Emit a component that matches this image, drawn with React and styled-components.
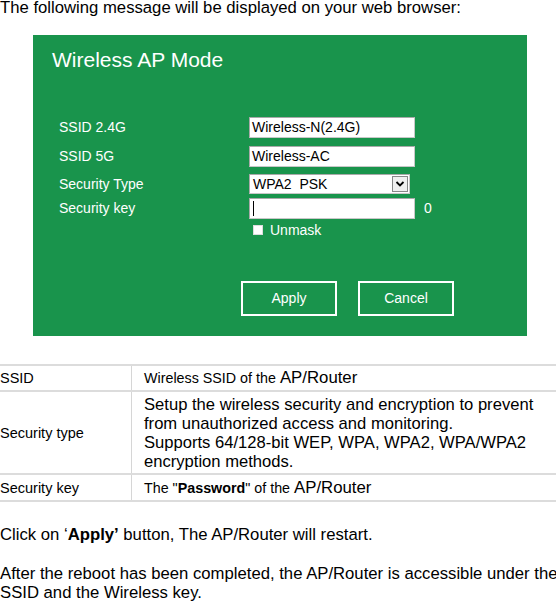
import React from "react";
import styled, { createGlobalStyle } from "styled-components";

const Global = createGlobalStyle`
  html, body { margin: 0; padding: 0; background: #fff; }
  body { font-family: "Liberation Sans", Arial, sans-serif; color: #000; }
`;

const Page = styled.div`
  width: 556px;
  display: flex;
  flex-direction: column;
`;

const Intro = styled.p`
  margin: 0;
  font-size: 16.7px;
  line-height: 16px;
  white-space: nowrap;
`;

const Panel = styled.div`
  margin: 19px 0 0 33px;
  width: 494px;
  height: 301px;
  background: #19944c;
  color: #fff;
  box-sizing: border-box;
  padding: 13px 0 0 19px;
  display: flex;
  flex-direction: column;
`;

const Title = styled.h1`
  margin: 0;
  font-size: 21px;
  font-weight: normal;
  line-height: 24px;
`;

const Form = styled.div`
  margin: 45px 0 0 7px;
  display: grid;
  grid-template-columns: 190px 166px auto;
  align-items: start;
`;

const Label = styled.div`
  font-size: 14px;
  height: ${(p) => p.h}px;
  line-height: ${(p) => p.lh || 20}px;
`;

const Cell = styled.div`
  height: ${(p) => p.h}px;
  display: flex;
  align-items: ${(p) => p.align || "flex-start"};
  box-sizing: border-box;
`;

const TextBox = styled.div`
  width: 166px;
  height: 21px;
  box-sizing: border-box;
  background: #fff;
  border: 1px solid #c8c8c8;
  border-top-color: #a9a9a9;
  border-left-color: #a9a9a9;
  color: #000;
  font-size: 14px;
  line-height: 19px;
  padding-left: 2px;
  display: flex;
  align-items: center;
`;

const Caret = styled.span`
  display: inline-block;
  width: 1px;
  height: 15px;
  background: #000;
  margin-left: 1px;
`;

const Select = styled.div`
  width: 161px;
  height: 20px;
  box-sizing: border-box;
  background: #fff;
  border: 1px solid #c8c8c8;
  border-top-color: #a9a9a9;
  border-left-color: #a9a9a9;
  color: #000;
  font-size: 14px;
  padding-left: 3px;
  display: flex;
  align-items: center;
  justify-content: space-between;
  white-space: pre;
`;

const Arrow = styled.div`
  width: 16px;
  height: 16px;
  box-sizing: border-box;
  border: 1px solid #888;
  background: #f0f0f0;
  margin-right: 1px;
  display: flex;
  align-items: center;
  justify-content: center;
`;

const Counter = styled.div`
  font-size: 14px;
  padding-left: 9px;
  height: 21px;
  line-height: 21px;
`;

const Check = styled.div`
  display: flex;
  align-items: center;
  gap: 7px;
  font-size: 14px;
  padding-left: 4px;
`;

const Box = styled.span`
  width: 10px;
  height: 10px;
  background: #fff;
  border: 1px solid #ddd;
  box-sizing: border-box;
`;

const Buttons = styled.div`
  margin: 43px 0 0 189px;
  display: flex;
  gap: 21px;
`;

const Button = styled.div`
  width: 96px;
  height: 35px;
  box-sizing: border-box;
  border: 2px solid #fff;
  color: #fff;
  font-size: 14px;
  display: flex;
  align-items: center;
  justify-content: center;
  padding-bottom: 2px;
`;

const Table = styled.table`
  margin-top: 28px;
  width: 556px;
  border-collapse: collapse;
  border-top: 2px solid #dcdcdc;
`;

const Tr = styled.tr`
  border-bottom: 2px solid #dcdcdc;
  height: ${(p) => p.h}px;
`;

const Th = styled.td`
  width: 131px;
  padding: 0;
  font-size: 14.5px;
  border-right: 1px solid #d6d6d6;
  vertical-align: middle;
`;

const Td = styled.td`
  padding: 0 0 0 12px;
  font-size: ${(p) => p.fs || 14.3}px;
  line-height: 19px;
  vertical-align: middle;
  white-space: nowrap;
`;

const Big = styled.span`
  font-size: 16.8px;
`;

const Para = styled.p`
  margin: ${(p) => p.mt}px 0 0;
  font-size: 16.7px;
  line-height: 19px;
  white-space: nowrap;
`;

const Chevron = () => (
  <svg width="10" height="8" viewBox="0 0 10 8">
    <path d="M1.5 2 L5 5.5 L8.5 2" fill="none" stroke="#000" strokeWidth="1.8" />
  </svg>
);

export default function App() {
  return (
    <Page>
      <Global />
      <Intro>The following message will be displayed on your web browser:</Intro>
      <Panel>
        <Title>Wireless AP Mode</Title>
        <Form>
          <Label h={29}>SSID 2.4G</Label>
          <Cell h={29}><TextBox>Wireless-N(2.4G)</TextBox></Cell>
          <div />
          <Label h={28}>SSID 5G</Label>
          <Cell h={28}><TextBox>Wireless-AC</TextBox></Cell>
          <div />
          <Label h={24}>Security Type</Label>
          <Cell h={24}>
            <Select>
              {"WPA2  PSK"}
              <Arrow><Chevron /></Arrow>
            </Select>
          </Cell>
          <div />
          <Label h={24} lh={21}>Security key</Label>
          <Cell h={24}><TextBox><Caret /></TextBox></Cell>
          <Counter>0</Counter>
          <div />
          <Cell h={16} align="center">
            <Check><Box />Unmask</Check>
          </Cell>
          <div />
        </Form>
        <Buttons>
          <Button>Apply</Button>
          <Button>Cancel</Button>
        </Buttons>
      </Panel>
      <Table>
        <tbody>
          <Tr h={26}>
            <Th>SSID</Th>
            <Td>Wireless SSID of the <Big>AP/Router</Big></Td>
          </Tr>
          <Tr h={83}>
            <Th>Security type</Th>
            <Td fs={16.6}>
              Setup the wireless security and encryption to prevent<br />
              from unauthorized access and monitoring.<br />
              Supports 64/128-bit WEP, WPA, WPA2, WPA/WPA2<br />
              encryption methods.
            </Td>
          </Tr>
          <Tr h={27}>
            <Th>Security key</Th>
            <Td>The "<b>Password</b>" of the <Big>AP/Router</Big></Td>
          </Tr>
        </tbody>
      </Table>
      <Para mt={23}>Click on ‘<b>Apply’</b> button, The AP/Router will restart.</Para>
      <Para mt={20}>
        After the reboot has been completed, the AP/Router is accessible under the<br />
        SSID and the Wireless key.
      </Para>
    </Page>
  );
}
